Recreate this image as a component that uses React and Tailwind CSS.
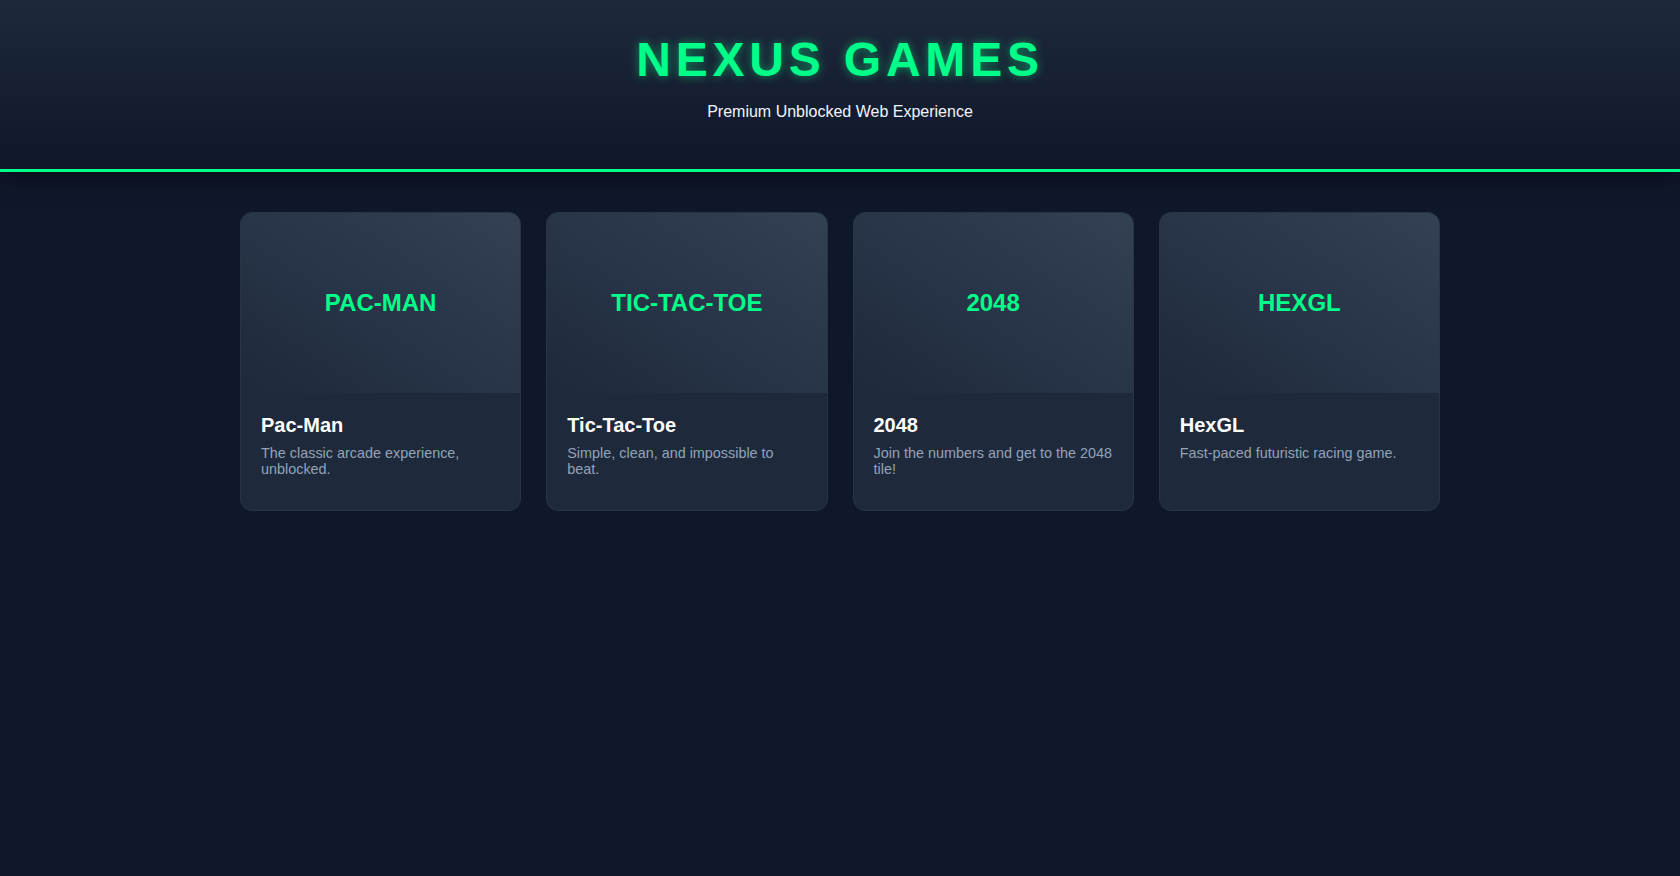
import React from 'react';

const games = [
  { id: 'pacman', label: 'PAC-MAN', name: 'Pac-Man', desc: 'The classic arcade experience, unblocked.' },
  { id: 'tictactoe', label: 'TIC-TAC-TOE', name: 'Tic-Tac-Toe', desc: 'Simple, clean, and impossible to beat.' },
  { id: '2048', label: '2048', name: '2048', desc: 'Join the numbers and get to the 2048 tile!' },
  { id: 'hexgl', label: 'HEXGL', name: 'HexGL', desc: 'Fast-paced futuristic racing game.' },
];

const GameCard = ({ game }) => (
  <div className="flex flex-col overflow-hidden rounded-xl border border-[#2a3446] bg-[#1e293b] cursor-pointer">
    <div className="flex h-[180px] items-center justify-center bg-gradient-to-tr from-[#1e293b] to-[#334155]">
      <span className="text-2xl font-bold text-[#00ff88]">{game.label}</span>
    </div>
    <div className="px-5 pt-[21px] pb-[33px]">
      <h3 className="mb-2 text-xl font-bold leading-[normal] text-white">{game.name}</h3>
      <p className="text-[14.4px] leading-[normal] text-[#94a3b8]">{game.desc}</p>
    </div>
  </div>
);

export default function App() {
  return (
    <div className="min-h-screen bg-[#0f172a] font-['Liberation_Sans',Arial,sans-serif]">
      <header className="flex h-[172px] flex-col items-center border-b-[3px] border-[#00ff88] bg-gradient-to-b from-[#1e293b] to-[#0f172a] pt-[36px] shadow-[0_4px_20px_rgba(0,0,0,0.5)]">
        <h1 className="text-5xl font-bold leading-none tracking-[0.1em] text-[#00ff88] [text-shadow:0_0_10px_rgba(0,255,136,0.5)]">
          NEXUS GAMES
        </h1>
        <p className="mt-4 text-base text-[#f1f5f9]">Premium Unblocked Web Experience</p>
      </header>

      <main className="mx-auto mt-10 grid max-w-[1200px] grid-cols-4 gap-[25px]">
        {games.map((g) => (
          <GameCard key={g.id} game={g} />
        ))}
      </main>
    </div>
  );
}
